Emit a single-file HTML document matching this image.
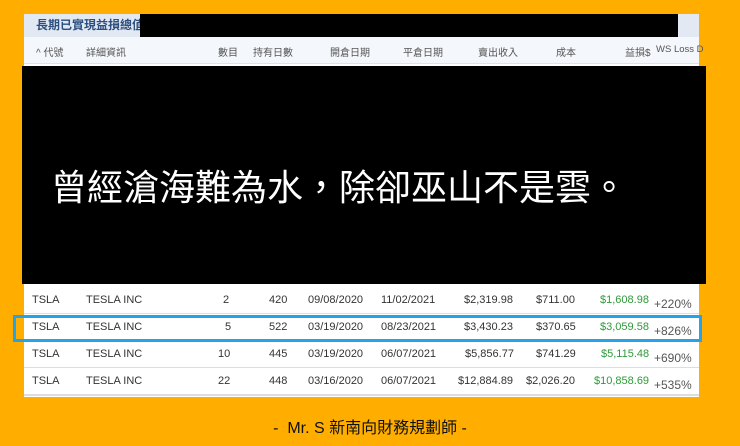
<!DOCTYPE html>
<html><head><meta charset="utf-8"><style>
body{margin:0;width:740px;height:446px;background:#FFAE00;position:relative;overflow:hidden;font-family:"Liberation Sans","Noto Sans CJK TC",sans-serif;}
.a{position:absolute}
.panel{left:24px;top:14px;width:675px;height:383px;background:#fff;}
.title{left:24px;top:14px;width:675px;height:23px;background:#e2e9f2;}
.tt{left:36px;top:16px;font-size:12px;font-weight:bold;color:#2c4f80;}
.hdr{left:24px;top:37px;width:675px;height:26px;background:#f4f7fb;border-bottom:1px solid #dde3ea;}
.h{top:44px;font-size:10px;color:#555;white-space:nowrap}
.row{left:24px;width:675px;height:26px;border-bottom:1px solid #ddd;font-size:11px;color:#333}
.row span{position:absolute;top:7px;white-space:nowrap}
.g{color:#2f9a3a}
.p{font-size:12px;top:10px!important;color:#555}
</style></head><body>
<div class="a panel"></div>
<div class="a title"></div>
<div class="a tt">長期已實現益損總值</div>
<div class="a" style="left:140px;top:14px;width:538px;height:23px;background:#000"></div>
<div class="a hdr"></div>
<div class="a h" style="left:36px">^ 代號</div>
<div class="a h" style="left:86px">詳細資訊</div>
<div class="a h" style="left:218px">數目</div>
<div class="a h" style="left:253px">持有日數</div>
<div class="a h" style="left:330px">開倉日期</div>
<div class="a h" style="left:403px">平倉日期</div>
<div class="a h" style="left:478px">賣出收入</div>
<div class="a h" style="left:556px">成本</div>
<div class="a h" style="left:625px">益損$</div>
<div class="a h" style="left:656px;font-size:9.5px">WS Loss D</div>
<div class="a" style="left:22px;top:66px;width:684px;height:218px;background:#000"></div>
<div class="a" style="left:51px;top:160px;font-size:36px;line-height:50px;color:#fff;font-family:'Noto Sans CJK TC',sans-serif;font-weight:400;white-space:nowrap">曾經滄海難為水，除卻巫山不是雲。</div>

<div class="a row" style="top:287px"><span style="left:8px">TSLA</span><span style="left:62px">TESLA INC</span><span style="left:199px">2</span><span style="left:245px">420</span><span style="left:284px">09/08/2020</span><span style="left:357px">11/02/2021</span><span style="left:440px">$2,319.98</span><span style="left:512px">$711.00</span><span class="g" style="left:576px">$1,608.98</span><span class="p" style="left:630px">+220%</span></div>
<div class="a row" style="top:314px"><span style="left:8px">TSLA</span><span style="left:62px">TESLA INC</span><span style="left:201px">5</span><span style="left:245px">522</span><span style="left:284px">03/19/2020</span><span style="left:357px">08/23/2021</span><span style="left:440px">$3,430.23</span><span style="left:512px">$370.65</span><span class="g" style="left:576px">$3,059.58</span><span class="p" style="left:630px">+826%</span></div>
<div class="a row" style="top:341px"><span style="left:8px">TSLA</span><span style="left:62px">TESLA INC</span><span style="left:194px">10</span><span style="left:245px">445</span><span style="left:284px">03/19/2020</span><span style="left:357px">06/07/2021</span><span style="left:441px">$5,856.77</span><span style="left:512px">$741.29</span><span class="g" style="left:577px">$5,115.48</span><span class="p" style="left:630px">+690%</span></div>
<div class="a row" style="top:368px;border-bottom:2px solid #ddd"><span style="left:8px">TSLA</span><span style="left:62px">TESLA INC</span><span style="left:194px">22</span><span style="left:245px">448</span><span style="left:284px">03/16/2020</span><span style="left:357px">06/07/2021</span><span style="left:434px">$12,884.89</span><span style="left:502px">$2,026.20</span><span class="g" style="left:570px">$10,858.69</span><span class="p" style="left:630px">+535%</span></div>
<div class="a" style="left:13px;top:315px;width:683px;height:21px;border:3px solid #27a2e8"></div>
<div class="a" style="left:0;width:740px;top:414px;text-align:center;font-size:16px;color:#111">-&nbsp; Mr. S 新南向財務規劃師 -</div>
</body></html>
